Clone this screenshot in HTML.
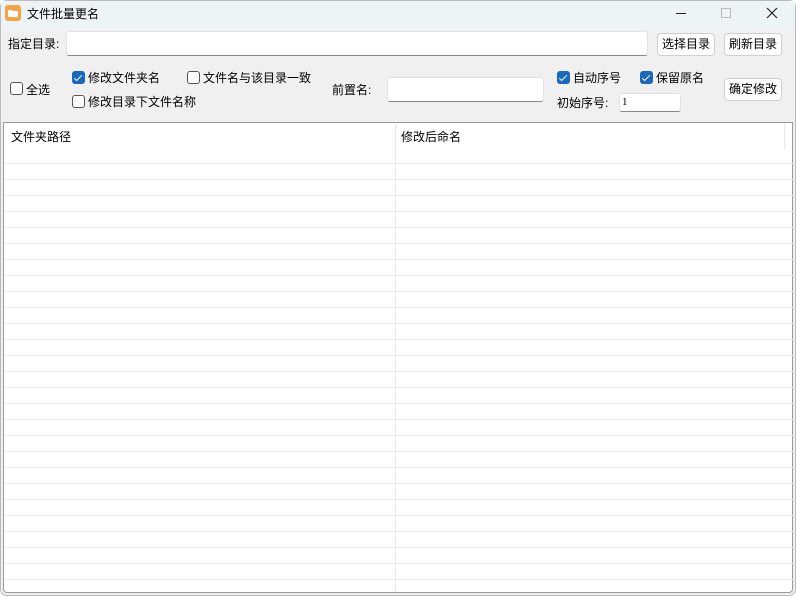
<!DOCTYPE html>
<html><head><meta charset="utf-8"><style>
*{margin:0;padding:0;box-sizing:border-box}
body{width:796px;height:598px;overflow:hidden;background:#fff;font-family:"Liberation Sans","Noto Sans CJK SC",sans-serif;font-size:12px;color:#000;position:relative}
.win{position:absolute;left:0;top:0;width:796px;height:596px;background:#f0f0f0;border-radius:7px;overflow:hidden;box-shadow:inset 0 0 0 1px #bbb}
.title{position:absolute;left:1px;top:1px;width:794px;height:29px;background:#eef4f5}
.a{position:absolute;white-space:nowrap}
.inp{position:absolute;background:#fff;border:1px solid #e2e2e2;border-bottom:1px solid #888;border-radius:3px}
.btn{position:absolute;background:#fdfdfd;border:1px solid #d0d0d0;border-radius:4px;text-align:center;line-height:21px;font-size:12px}
.cb{position:absolute;width:13px;height:13px;border:1px solid #555;border-radius:3px;background:#fff}
.cb.on{background:#1867c0;border-color:#1867c0}
.cb.on:after{content:"";position:absolute;left:3px;top:1px;width:3px;height:7px;border:solid #fff;border-width:0 1.5px 1.5px 0;transform:rotate(45deg)}
.table{position:absolute;left:3px;top:122px;width:790px;height:471px;background:#fff;border:1px solid #999;border-radius:0 0 4px 4px}
</style></head><body>
<div class="win">
<div class="title"></div>
<svg class="a" style="left:5px;top:5px" width="16" height="16"><rect x="0" y="0" width="16" height="16" rx="3" fill="#f5a441"/><path d="M3 5h4l1 1h5v6H3z" fill="#fff"/></svg>
<div class="a" style="left:27px;top:5px;font-size:12px">文件批量更名</div>
<div class="a" style="left:676px;top:13px;width:10px;height:1px;background:#222"></div>
<div class="a" style="left:721px;top:8px;width:10px;height:10px;border:1px solid #bbb"></div>
<svg class="a" style="left:766px;top:7px" width="12" height="12"><path d="M1 1L11 11M11 1L1 11" stroke="#222" stroke-width="1.2"/></svg>

<div class="a" style="left:8px;top:35px">指定目录:</div>
<div class="inp" style="left:66px;top:31px;width:582px;height:25px"></div>
<div class="btn" style="left:657px;top:33px;width:58px;height:23px">选择目录</div>
<div class="btn" style="left:724px;top:33px;width:58px;height:23px">刷新目录</div>

<div class="cb" style="left:10px;top:82px"></div><div class="a" style="left:26px;top:81px">全选</div>
<div class="cb on" style="left:72px;top:71px"></div><div class="a" style="left:88px;top:69px">修改文件夹名</div>
<div class="cb" style="left:72px;top:95px"></div><div class="a" style="left:88px;top:93px">修改目录下文件名称</div>
<div class="cb" style="left:187px;top:71px"></div><div class="a" style="left:203px;top:69px">文件名与该目录一致</div>
<div class="a" style="left:332px;top:81px">前置名:</div>
<div class="inp" style="left:387px;top:77px;width:157px;height:25px"></div>
<div class="cb on" style="left:557px;top:71px"></div><div class="a" style="left:573px;top:69px">自动序号</div>
<div class="cb on" style="left:640px;top:71px"></div><div class="a" style="left:656px;top:69px">保留原名</div>
<div class="a" style="left:557px;top:94px">初始序号:</div>
<div class="inp" style="left:619px;top:93px;width:62px;height:19px;font-family:'Liberation Serif',serif;font-size:11px;padding:2px 0 0 2px">1</div>
<div class="btn" style="left:724px;top:78px;width:58px;height:23px">确定修改</div>

<div class="table">
<div class="a" style="left:7px;top:5px">文件夹路径</div>
<div class="a" style="left:397px;top:5px">修改后命名</div>
<div class="a" style="left:391px;top:0;width:1px;height:469px;background:#e8e8e8"></div>
<div class="a" style="left:780px;top:0;width:1px;height:26px;background:#e8e8e8"></div>
<div class="a" style="left:0;top:40px;width:790px;height:430px;background:repeating-linear-gradient(#ececec 0 1px,transparent 1px 16px)"></div>
</div>
</div>
</body></html>
